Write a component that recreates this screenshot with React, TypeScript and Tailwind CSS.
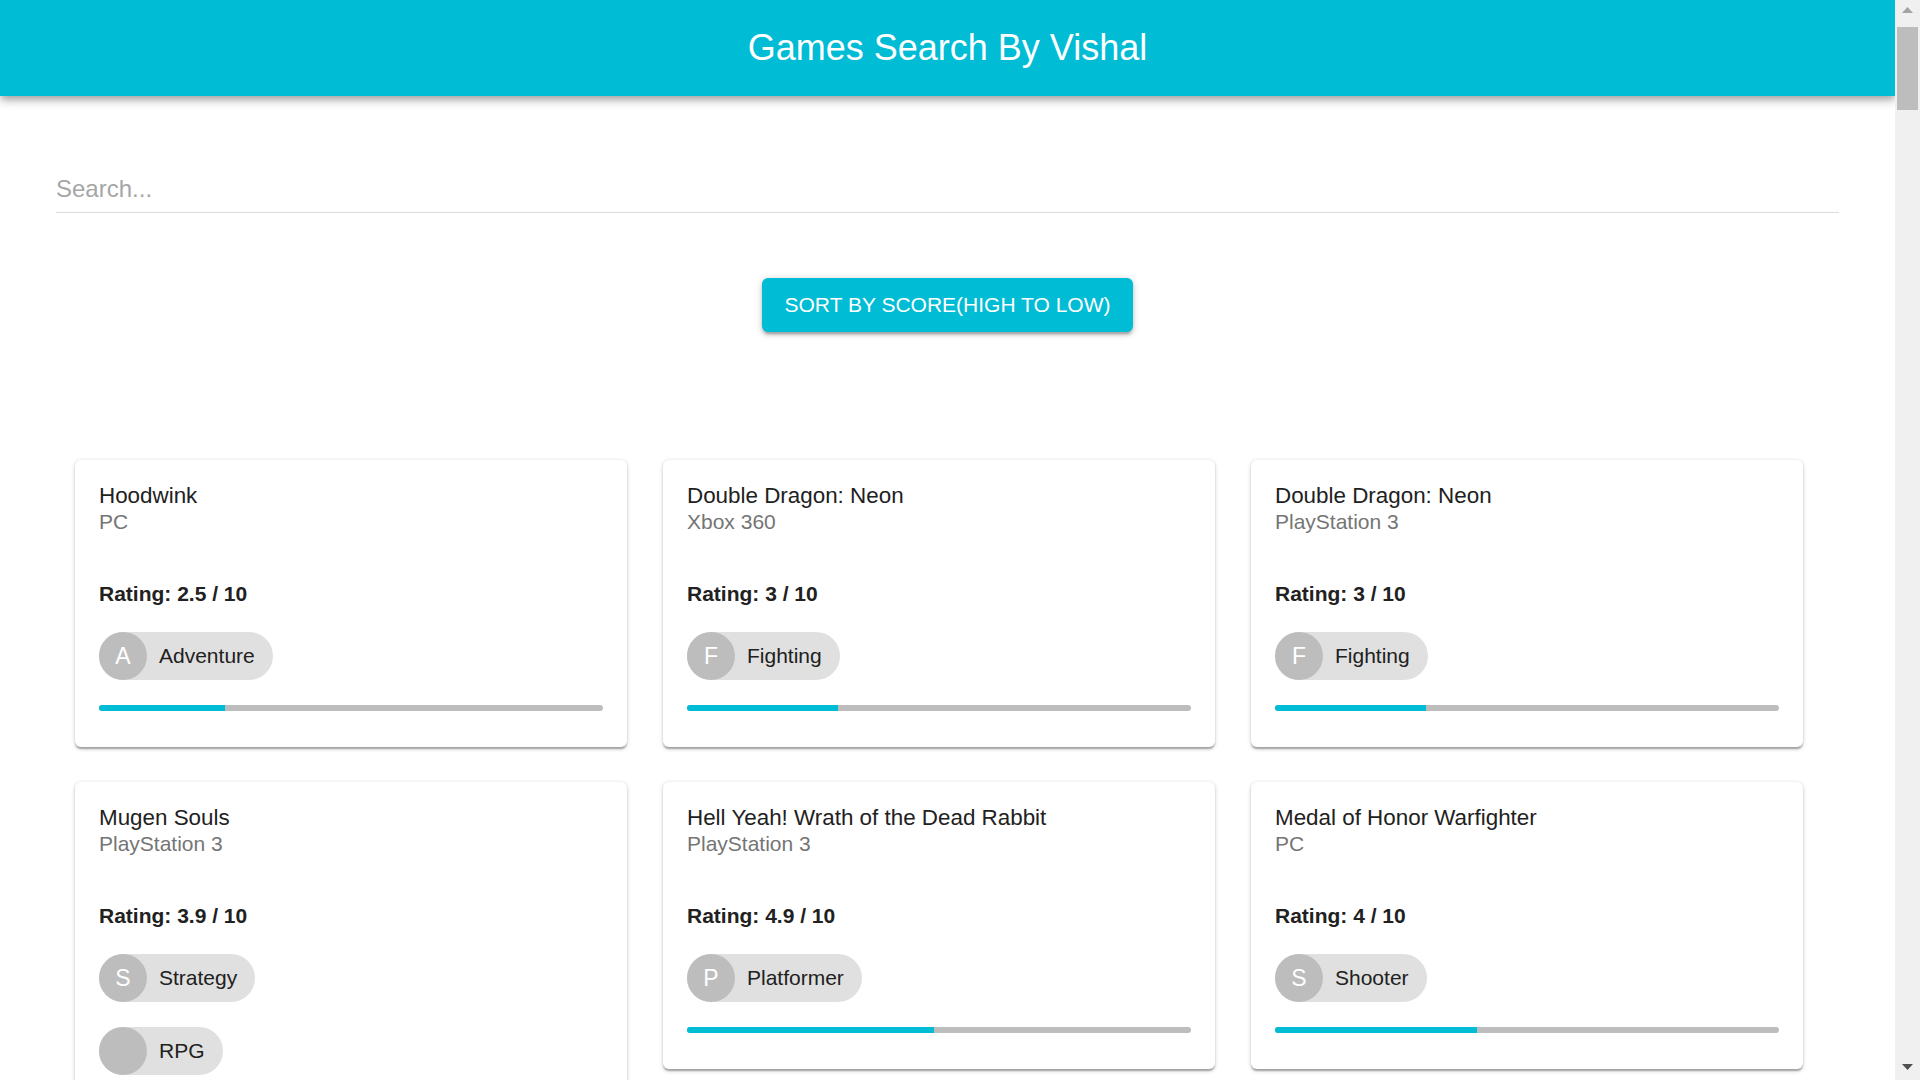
import React from "react";

type Game = {
    title: string;
    platform: string;
    score: number;
    genres: string[];
};

const games: Game[] = [
    { title: "Hoodwink", platform: "PC", score: 2.5, genres: ["Adventure"] },
    { title: "Double Dragon: Neon", platform: "Xbox 360", score: 3, genres: ["Fighting"] },
    { title: "Double Dragon: Neon", platform: "PlayStation 3", score: 3, genres: ["Fighting"] },
    { title: "Mugen Souls", platform: "PlayStation 3", score: 3.9, genres: ["Strategy", " RPG"] },
    { title: "Hell Yeah! Wrath of the Dead Rabbit", platform: "PlayStation 3", score: 4.9, genres: ["Platformer"] },
    { title: "Medal of Honor Warfighter", platform: "PC", score: 4, genres: ["Shooter"] },
];

const GenreChip: React.FC<{ genre: string }> = ({ genre }) => (
    <div className="flex">
        <div className="flex h-[48px] items-center rounded-full bg-[#e0e0e0]">
            <span className="flex h-[48px] w-[48px] items-center justify-center rounded-full bg-[#bdbdbd] text-[23px] text-white">
                {genre.charAt(0)}
            </span>
            <span className="pl-[12px] pr-[18px] text-[21px] text-[#212121]">{genre.trim()}</span>
        </div>
    </div>
);

const GameCard: React.FC<{ game: Game }> = ({ game }) => (
    <div className="rounded-[6px] bg-white px-[24px] pt-[22px] pb-[36px] shadow-[0_1.5px_4.5px_0_rgba(0,0,0,0.2),0_1.5px_1.5px_0_rgba(0,0,0,0.14),0_3px_1.5px_-1.5px_rgba(0,0,0,0.12)]">
        <h2 className="text-[22.4px] leading-[28px] text-[#212121]">{game.title}</h2>
        <p className="text-[21px] leading-[24px] text-[#757575]">{game.platform}</p>
        <p className="mt-[48px] text-[21px] font-bold leading-[24px] text-[#212121]">
            Rating: {game.score} / 10
        </p>
        <div className="mt-[26px] flex flex-col gap-[25px]">
            {game.genres.map((genre, index) => (
                <GenreChip key={index} genre={genre} />
            ))}
        </div>
        <div className="mt-[25px] h-[6px] overflow-hidden rounded-full bg-[#bdbdbd]">
            <div className="h-full bg-[#00bcd4]" style={{ width: `${game.score * 10}%` }} />
        </div>
    </div>
);

const ScrollBar: React.FC = () => (
    <div className="flex h-screen w-[25px] shrink-0 flex-col bg-[#f0f0f0]">
        <div className="flex justify-center pt-[7px]">
            <svg width="11" height="6" viewBox="0 0 11 6">
                <polygon points="5.5,0 11,6 0,6" fill="#a3a3a3" />
            </svg>
        </div>
        <div className="ml-[2px] mt-[14px] h-[83px] w-[21px] bg-[#bdbdbd]" />
        <div className="flex-1" />
        <div className="flex justify-center pb-[10px]">
            <svg width="11" height="6" viewBox="0 0 11 6">
                <polygon points="0,0 11,0 5.5,6" fill="#505050" />
            </svg>
        </div>
    </div>
);

export default function App() {
    return (
        <div className="flex h-screen w-full overflow-hidden bg-white font-['Liberation_Sans',Arial,sans-serif]">
            <div className="h-screen min-w-0 flex-1 overflow-y-auto [scrollbar-width:none]">
                <header className="relative z-10 flex h-[96px] items-center justify-center bg-[#00bcd4] shadow-[0_3px_6px_-1.5px_rgba(0,0,0,0.2),0_6px_7.5px_0_rgba(0,0,0,0.14),0_1.5px_15px_0_rgba(0,0,0,0.12)]">
                    <h1 className="text-[36px] leading-[48px] text-white">Games Search By Vishal</h1>
                </header>

                <div className="px-[56px] pt-[70px]">
                    <div className="border-b border-[#dcdcdc]">
                        <input
                            type="text"
                            placeholder="Search..."
                            className="w-full bg-transparent py-[9px] text-[24px] leading-[28px] text-[#212121] outline-none placeholder:text-[#a6a6a6]"
                        />
                    </div>
                </div>

                <div className="mt-[65px] flex justify-center">
                    <button className="flex h-[54px] items-center rounded-[6px] bg-[#00bcd4] px-[23px] text-[21px] uppercase text-white shadow-[0_1.5px_7.5px_0_rgba(0,0,0,0.2),0_3px_3px_0_rgba(0,0,0,0.14),0_4.5px_1.5px_-3px_rgba(0,0,0,0.12)]">
                        Sort by score(high to low)
                    </button>
                </div>

                <main className="mt-[128px] grid grid-cols-[repeat(3,552px)] items-start gap-x-[36px] gap-y-[35px] pb-[40px] pl-[75px]">
                    {games.map((game, index) => (
                        <GameCard key={index} game={game} />
                    ))}
                </main>
            </div>
            <ScrollBar />
        </div>
    );
}
